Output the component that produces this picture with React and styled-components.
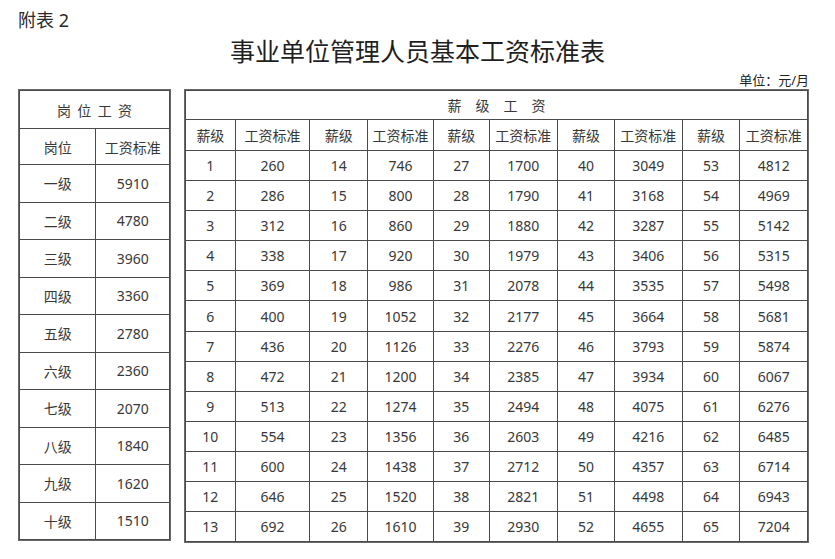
import { Fragment } from 'react';
import styled, { createGlobalStyle } from 'styled-components';

const GlobalStyle = createGlobalStyle`
    html, body {
        margin: 0;
        padding: 0;
        background: #ffffff;
    }
    body {
        font-family: "Noto Sans", "Noto Sans CJK SC", sans-serif;
        color: #2b2b2b;
    }
`;

const postRows = [
    ["一级", 5910], ["二级", 4780], ["三级", 3960], ["四级", 3360], ["五级", 2780],
    ["六级", 2360], ["七级", 2070], ["八级", 1840], ["九级", 1620], ["十级", 1510],
];

const payValues = [
    260, 286, 312, 338, 369, 400, 436, 472, 513, 554, 600, 646, 692,
    746, 800, 860, 920, 986, 1052, 1126, 1200, 1274, 1356, 1438, 1520, 1610,
    1700, 1790, 1880, 1979, 2078, 2177, 2276, 2385, 2494, 2603, 2712, 2821, 2930,
    3049, 3168, 3287, 3406, 3535, 3664, 3793, 3934, 4075, 4216, 4357, 4498, 4655,
    4812, 4969, 5142, 5315, 5498, 5681, 5874, 6067, 6276, 6485, 6714, 6943, 7204,
];

const groups = [0, 1, 2, 3, 4];

const App = () => {
    return (
        <>
            <GlobalStyle/>
            <Page>
                <Label>附表 2</Label>
                <Title>事业单位管理人员基本工资标准表</Title>
                <Unit>单位：元/月</Unit>
                <Tables>
                    <PostGrid>
                        <Cell $span={2} $spaced="0.45em" $h={37}>岗位工资</Cell>
                        <Cell $h={35}>岗位</Cell>
                        <Cell $h={35}>工资标准</Cell>
                        {postRows.map(([name, value]) => (
                            <Fragment key={name}>
                                <Cell $h={36.5}>{name}</Cell>
                                <Cell $h={36.5}>{value}</Cell>
                            </Fragment>
                        ))}
                    </PostGrid>
                    <PayGrid>
                        <Cell $span={10} $spaced="1em" $h={28}>薪级工资</Cell>
                        {groups.map((g) => (
                            <Fragment key={"h" + g}>
                                <Cell $h={30}>薪级</Cell>
                                <Cell $h={30}>工资标准</Cell>
                            </Fragment>
                        ))}
                        {Array.from({ length: 13 }).map((_, r) =>
                            groups.map((g) => (
                                <Fragment key={r + "-" + g}>
                                    <Cell $h={29.1}>{g * 13 + r + 1}</Cell>
                                    <Cell $h={29.1}>{payValues[g * 13 + r]}</Cell>
                                </Fragment>
                            ))
                        )}
                    </PayGrid>
                </Tables>
            </Page>
        </>
    );
};

const Page = styled.div`
    width: 835px;
    height: 559px;
    box-sizing: border-box;
    padding: 8px 26px 0 18px;
    overflow: hidden;
`;

const Label = styled.div`
    font-size: 18px;
    line-height: 24px;
    color: #2a2a2a;
`;

const Title = styled.h1`
    margin: 3px 0 0 0;
    font-size: 25px;
    line-height: 32px;
    font-weight: 400;
    text-align: center;
    color: #1f1f1f;
    padding-left: 8px;
`;

const Unit = styled.div`
    margin-top: 4px;
    font-size: 13px;
    line-height: 18px;
    text-align: right;
    color: #222;
`;

const Tables = styled.div`
    display: flex;
    gap: 13px;
    align-items: flex-start;
`;

const BaseGrid = styled.div`
    display: grid;
    box-sizing: border-box;
    background: #4a4a4a;
    padding: 1px;
    gap: 1px;
    border: 1px solid #6a6a6a;
`;

const PostGrid = styled(BaseGrid)`
    width: 153px;
    grid-template-columns: 76fr 73fr;
`;

const PayGrid = styled(BaseGrid)`
    width: 625px;
    grid-template-columns: 49fr 74fr 57fr 65fr 55fr 68fr 56fr 67fr 57fr 67fr;
`;

const Cell = styled.div`
    grid-column: span ${(p) => p.$span || 1};
    height: ${(p) => p.$h}px;
    background: #ffffff;
    display: flex;
    align-items: center;
    justify-content: center;
    font-size: 14px;
    color: #383838;
    letter-spacing: ${(p) => p.$spaced || 'normal'};
    text-indent: ${(p) => p.$spaced || '0'};
`;

export default App;
